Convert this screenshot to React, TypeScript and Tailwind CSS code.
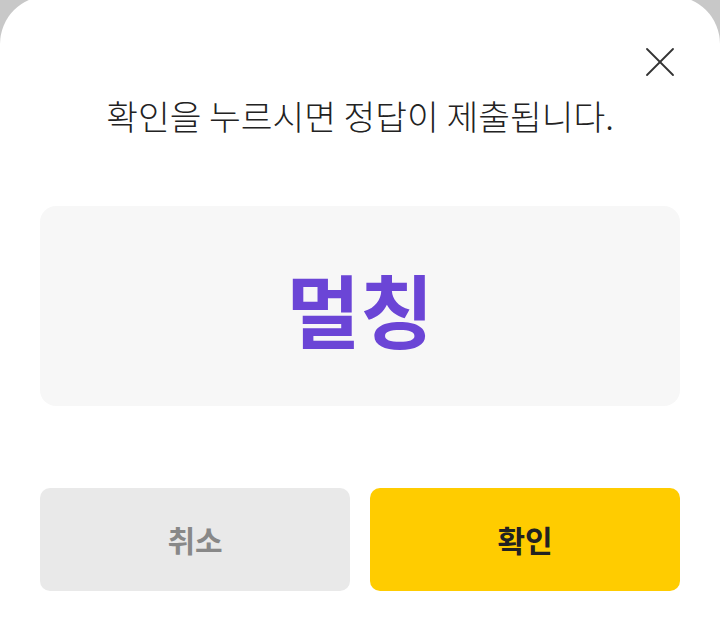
import { X } from 'lucide-react';

const font = { fontFamily: '"Noto Sans CJK KR", "Noto Sans", sans-serif' };

export default function App() {
    return (
        <div className="h-[628px] w-[720px] overflow-hidden bg-[#c8c8c8]" style={font}>
            <div className="mt-[-4px] flex h-[640px] flex-col rounded-t-[48px] bg-white px-10">
                <div className="flex justify-end pt-[40px] -mr-[6px]">
                    <button className="flex h-[52px] w-[52px] items-center justify-center text-[#333]">
                        <X size={52} strokeWidth={0.85} />
                    </button>
                </div>

                <p className="mt-[5px] text-center text-[34.5px] font-light leading-[44px] text-[#222]">
                    확인을 누르시면 정답이 제출됩니다.
                </p>

                <div className="mt-[69px] flex h-[200px] items-center justify-center rounded-2xl bg-[#f7f7f7]">
                    <span className="mt-[2px] text-[80px] font-bold leading-none text-[#6b45d6]">멀칭</span>
                </div>

                <div className="mt-[82px] grid grid-cols-2 gap-5">
                    <button className="h-[103px] rounded-[10px] bg-[#e9e9e9] text-[30px] font-bold text-[#888]">
                        취소
                    </button>
                    <button className="h-[103px] rounded-[10px] bg-[#ffcc00] text-[30px] font-bold text-[#222]">
                        확인
                    </button>
                </div>
            </div>
        </div>
    );
}
